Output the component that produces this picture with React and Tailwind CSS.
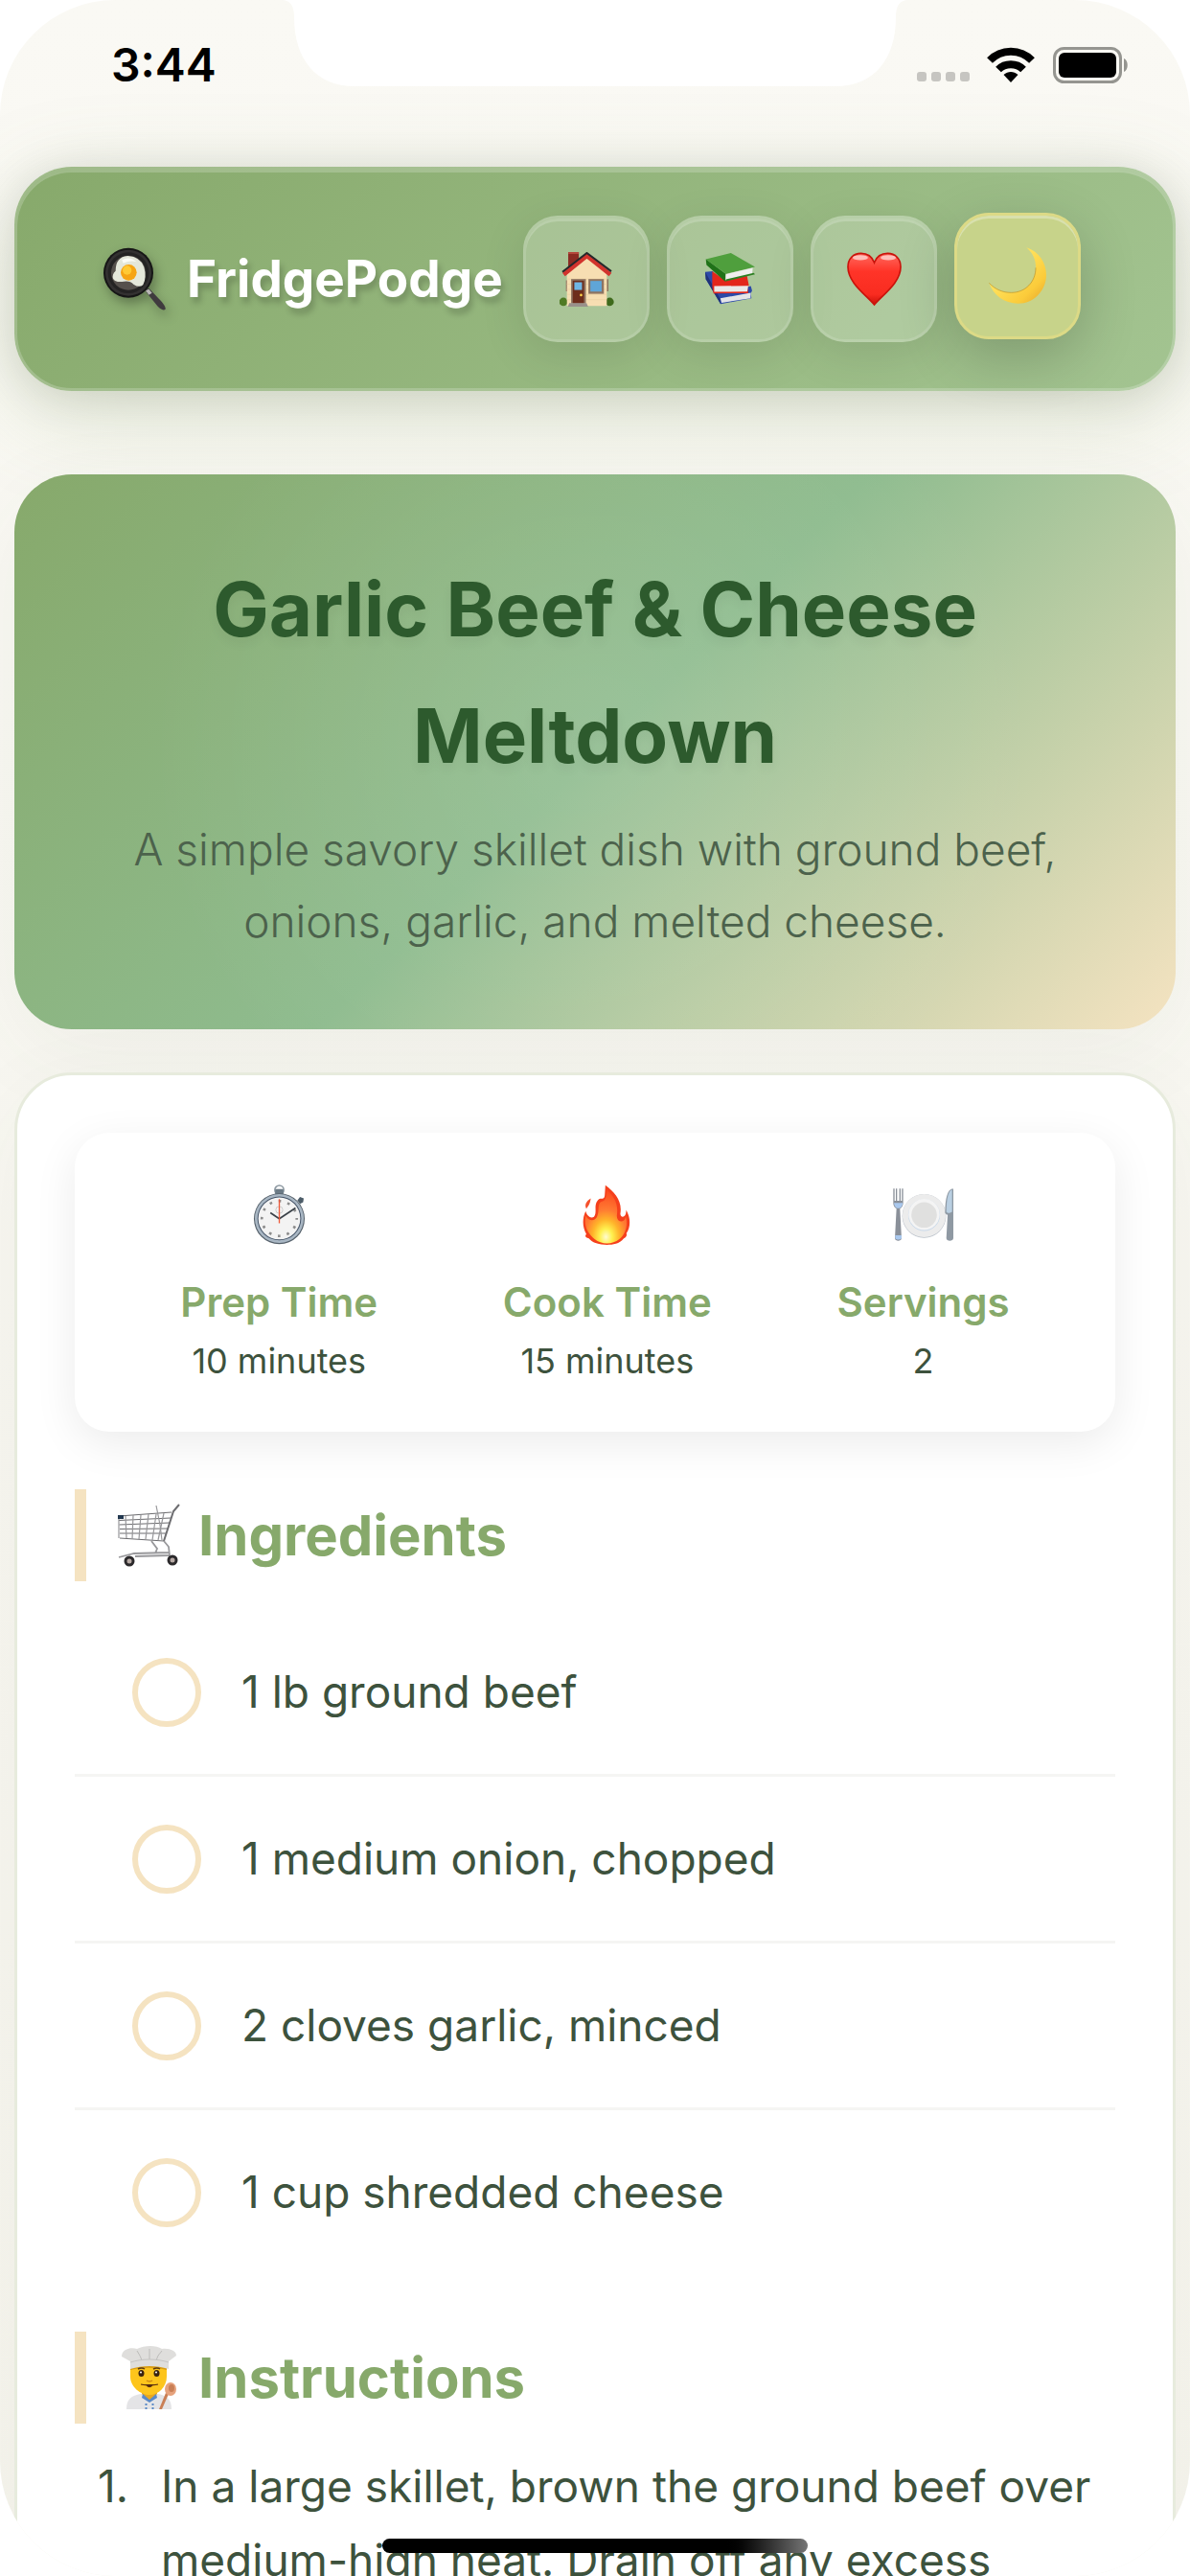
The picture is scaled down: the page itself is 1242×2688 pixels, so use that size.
import { useState } from "react";

function PanIcon() {
  return (
    <svg viewBox="0 0 198 198" className="size-[66px] shrink-0 drop-shadow-[3px_6px_6px_rgba(0,0,0,0.3)]" aria-hidden="true">
      <path d="M134 132 L142 128 L182 170 Q198 190 193 195 Q186 200 170 185 L134 141Z" fill="#3f3b3e" />
      <path d="M132 136 L142 131 L152 143 L142 149Z" fill="#b9b7b5" />
      <circle cx="78" cy="80" r="78" fill="#161616" />
      <circle cx="78" cy="80" r="72" fill="#333131" />
      <circle cx="78" cy="80" r="64" fill="#242323" />
      <circle cx="78" cy="80" r="54" fill="#55504c" />
      <path d="M30 98 Q26 84 38 74 Q38 30 76 27 Q116 30 127 62 Q136 94 124 118 Q112 128 94 116 Q82 102 58 108 Q36 110 30 98Z" fill="#e4e7da" />
      <path d="M58 40 Q82 26 104 46 Q84 40 62 50Z" fill="#fafbf6" />
      <circle cx="79" cy="79" r="25" fill="#f6a414" />
      <circle cx="74" cy="72" r="14" fill="#ffc935" />
    </svg>
  );
}

function HouseIcon() {
  return (
    <svg viewBox="0 0 170 170" className="size-[57px]" aria-hidden="true">
      <rect x="27" y="0" width="33" height="56" fill="#8a2a22" />
      <rect x="27" y="0" width="33" height="6" fill="#b4473c" />
      <path d="M20 88h5v34h-5zM147 84h5v38h-5z" fill="#8d6f5b" />
      <circle cx="12" cy="155" r="13" fill="#4f7a24" />
      <circle cx="156" cy="155" r="13" fill="#3f6a1c" />
      <path d="M23 168V66L85 14l62 52v102z" fill="#f7deb2" />
      <path d="M23 84h124M23 100h124M23 116h124M23 132h124M23 148h124" stroke="#ecd0a0" strokeWidth="2" />
      <path d="M13 70L85 12l73 58" fill="none" stroke="#d2332d" strokeWidth="13" />
      <path d="M9 62L85 3l76 57" fill="none" stroke="#26282b" strokeWidth="6" />
      <rect x="36" y="84" width="46" height="76" fill="#8e7461" />
      <rect x="41" y="89" width="35" height="71" fill="#6d2d1b" />
      <rect x="46" y="94" width="24" height="24" fill="#6fb6e4" />
      <circle cx="67" cy="134" r="4" fill="#ffd34a" />
      <rect x="90" y="84" width="48" height="46" fill="#8e7461" />
      <rect x="96" y="90" width="35" height="33" fill="#5fa5d8" />
      <path d="M30 159h54l5 11H26z" fill="#99918b" />
    </svg>
  );
}

function BooksIcon() {
  return (
    <svg viewBox="-6 -2 170 170" className="size-[57px]" aria-hidden="true">
      <path d="M0 60L24 58l30 66 88-20 4 14-4 8 2 16-96 18L2 82z" fill="#2c49a8" />
      <path d="M0 60l46 82 2 18L2 82z" fill="#1f3279" />
      <path d="M47 142l95-17-1 17-90 14z" fill="#e4e4e8" />
      <path d="M22 58l40 28 68-14 6 30-4 4 2 20-108 1-4-22z" fill="#e3261b" />
      <path d="M28 104l106-1-3 18-103 1z" fill="#ebe9e8" />
      <path d="M2 20L80 1l75 43-90 22z" fill="#4f9f3d" />
      <path d="M2 20l62 46-2 24L4 38z" fill="#1f7218" />
      <path d="M64 67l84-20-2 20-82 20z" fill="#f0efee" />
      <path d="M62 90l93-23-4-4-86 20z" fill="#2c7f22" />
    </svg>
  );
}

function HeartIcon() {
  return (
    <svg viewBox="0 0 172 170" className="size-[57px]" aria-hidden="true">
      <defs>
        <linearGradient id="heartFill" x1="0" y1="0" x2="0" y2="1">
          <stop offset="0" stopColor="#ff6a5f" />
          <stop offset="0.35" stopColor="#ff3428" />
          <stop offset="0.8" stopColor="#f92c20" />
          <stop offset="1" stopColor="#c81008" />
        </linearGradient>
      </defs>
      <path
        d="M86 165C62 135 3 97 3 46C3 20 20 3 44 3C66 3 80 16 86 32C92 16 106 3 128 3C152 3 169 20 169 46C169 97 110 135 86 165Z"
        fill="url(#heartFill)"
        stroke="#c9130b"
        strokeWidth="5"
      />
      <ellipse cx="42" cy="17" rx="24" ry="8" fill="#fff" opacity="0.6" />
      <ellipse cx="130" cy="17" rx="24" ry="8" fill="#fff" opacity="0.6" />
    </svg>
  );
}

function MoonIcon() {
  return (
    <svg viewBox="0 0 180 180" className="size-[60px]" aria-hidden="true">
      <defs>
        <linearGradient id="moonFill" x1="0" y1="0" x2="1" y2="1">
          <stop offset="0.4" stopColor="#ffe05a" />
          <stop offset="0.75" stopColor="#fbcb3a" />
          <stop offset="1" stopColor="#e3a32c" />
        </linearGradient>
      </defs>
      <path
        d="M118 1C158 14 180 50 180 86C180 136 140 176 92 176C48 176 14 150 1 112C20 132 44 142 70 142C115 142 147 108 147 64C147 38 138 18 118 1Z"
        fill="url(#moonFill)"
      />
      <path d="M1 112C20 132 44 142 70 142C115 142 147 108 147 64" fill="none" stroke="#b8912c" strokeWidth="2" />
    </svg>
  );
}

function StopwatchIcon() {
  return (
    <svg viewBox="-14 0 190 190" className="size-[63px]" aria-hidden="true">
      <circle cx="81" cy="17" r="14" fill="none" stroke="#8f9aa3" strokeWidth="5" />
      <rect x="68" y="14" width="26" height="18" rx="4" fill="#6b7a85" />
      <path d="M138 50l8-11 12 5-2 12-10 5z" fill="#4c5c68" />
      <circle cx="81" cy="108" r="80" fill="#56616b" />
      <circle cx="81" cy="107" r="77" fill="#a9b7c4" />
      <circle cx="81" cy="107" r="69" fill="#47566a" />
      <circle cx="81" cy="107" r="66" fill="#f3f3f3" />
      <circle cx="81" cy="107" r="55" fill="none" stroke="#8c8c8c" strokeWidth="8" strokeDasharray="8 20.8" strokeDashoffset="4" />
      <circle cx="81" cy="80" r="11" fill="none" stroke="#bbb" strokeWidth="2" />
      <path d="M53 89l28 19 51-34" fill="none" stroke="#3a4148" strokeWidth="5" />
      <path d="M81 46v76" stroke="#ee5a3a" strokeWidth="4" />
    </svg>
  );
}

function FireIcon() {
  return (
    <svg viewBox="-20 0 190 190" className="size-[63px]" aria-hidden="true">
      <defs>
        <radialGradient id="fireFill" cx="0.5" cy="0.88" r="0.85">
          <stop offset="0" stopColor="#fffbd0" />
          <stop offset="0.18" stopColor="#fff04e" />
          <stop offset="0.38" stopColor="#ffb32a" />
          <stop offset="0.6" stopColor="#ff7a32" />
          <stop offset="1" stopColor="#fb4a20" />
        </radialGradient>
      </defs>
      <path
        d="M70 2C100 24 124 52 117 92C118 108 138 104 135 80C150 104 150 134 136 154C140 162 132 168 128 170C114 188 94 190 75 190C52 190 28 184 18 170C8 168 4 162 10 156C-4 132 -2 104 8 84C12 100 24 108 34 102C46 88 30 62 50 46C58 42 66 50 68 34Z"
        fill="#f5401c"
      />
      <path
        d="M74 16C96 36 112 60 106 98C106 122 132 122 134 100C142 126 134 156 114 172C92 190 58 190 36 172C12 152 2 126 8 98C18 116 36 118 44 100C52 82 44 62 56 54C66 54 74 48 74 16Z"
        fill="url(#fireFill)"
      />
      <path d="M24 44C22 60 18 66 10 76C4 66 8 54 24 44Z" fill="#f5502c" />
    </svg>
  );
}

function PlateIcon() {
  return (
    <svg viewBox="0 -12 190 190" className="size-[63px]" aria-hidden="true">
      <circle cx="98" cy="87" r="69" fill="#b9c0c9" />
      <circle cx="98" cy="86" r="68" fill="#ececec" />
      <circle cx="98" cy="84" r="50" fill="#c9d9ea" />
      <circle cx="98" cy="82" r="49" fill="#f4f4f4" />
      <circle cx="98" cy="84" r="40" fill="#e0e0df" />
      <path d="M1 1h4v38h4V1h4v38h7V1h4v38h4V1h4v44c0 12-6 16-10 19l5 94c0 10-21 10-21 0l5-94C6 60 1 56 1 45z" fill="#8a9099" />
      <path d="M3 46h28c-2 12-6 14-10 17h-8C9 60 5 58 3 46zM7 148h20v9c0 6-20 6-20 0z" fill="#a9c8ee" />
      <path d="M188 1c-16 2-24 30-24 76 4 8 8 6 8 6l-4 74c0 11 22 11 22 0V3z" fill="#8f99a3" />
      <path d="M186 4c-12 4-18 30-18 70 5 6 10 4 18 0z" fill="#b9cfe2" />
    </svg>
  );
}

function CartIcon() {
  return (
    <svg viewBox="0 0 66 66" className="size-[66px]" fill="none" stroke="#6d6d70" strokeWidth="1.2" aria-hidden="true">
      <path d="M1 13L56 9M1 17.5L55 15M1.5 22L54 20M2 26.5L52 26M2 31L51 31M2 36L48 39" />
      <path d="M1 13v23M8 13l1 23M16 12l-1 25M24 12l-2 25M32 11l-3 26M40 11l-4 27M48 10l-6 28" stroke="#97979a" />
      <path d="M40 2l4 20 2 16" stroke="#97979a" />
      <path d="M64 1l-6 7-10 31" strokeWidth="2" />
      <path d="M48 39l5 6 1 9M35 39l6 8-2 5M1 56l16-4 37-1M54 54l-36 1" strokeWidth="1.8" stroke="#98989b" />
      <rect x="0" y="12" width="6" height="4" fill="#22384f" stroke="none" />
      <circle cx="12" cy="60" r="4" fill="#b7aaa5" stroke="#2b292b" strokeWidth="3" />
      <circle cx="57" cy="59" r="4" fill="#b7aaa5" stroke="#2b292b" strokeWidth="3" />
    </svg>
  );
}

function ChefIcon() {
  return (
    <svg viewBox="-4 0 66 66" className="size-[66px]" aria-hidden="true">
      <path d="M5 66C5 55 10 52 20 50h18c9 2 14 5 14 16z" fill="#e4e4e6" />
      <path d="M21 50l8 7 8-7v-4H21z" fill="#e8a81f" />
      <path d="M22 50l7 6 7-6 1 4-8 5-8-5z" fill="#5b8ac6" />
      <path d="M25.5 60v6M32.5 60v6" stroke="#5b8ac6" strokeWidth="2" strokeDasharray="2 2" />
      <path d="M9 20h38v12c0 11-9 19-18 19S9 43 9 32z" fill="#fdc51c" />
      <path d="M9 20h38v5c-12-3-26-3-38 0z" fill="#d99c12" />
      <path d="M17 24q4-2 7 0M33 24q4-2 7 0" stroke="#5c3b12" strokeWidth="1.5" fill="none" />
      <ellipse cx="20.5" cy="28.5" rx="3" ry="3.5" fill="#3a2410" />
      <ellipse cx="36.5" cy="28.5" rx="3" ry="3.5" fill="#3a2410" />
      <circle cx="20" cy="27.5" r="1" fill="#fff" />
      <circle cx="36" cy="27.5" r="1" fill="#fff" />
      <path d="M26 36q3 2 6 0" stroke="#c98512" strokeWidth="1.5" fill="none" />
      <path d="M20 40q9 2 18 0M26 41h6q-3 3-6 0z" stroke="#5a3010" strokeWidth="1.2" fill="#4d2410" />
      <path d="M9 24V16L0 11C0 3 10 1 16 3C24-1 36-1 42 3C50 2 57 5 57 10L49 16v8C36 20 22 20 9 24Z" fill="#dfdedc" />
      <path d="M16 5q4 6 5 10M42 5q-5 5-6 10M29 3v11" stroke="#bdbcba" fill="none" />
      <path d="M9 17C22 13 36 13 49 17" stroke="#c6c5c3" fill="none" />
      <path d="M49 50L42 66h-3l7-17z" fill="#c97f56" />
      <ellipse cx="51" cy="45" rx="6" ry="7" fill="#e6a27c" />
      <ellipse cx="52" cy="44" rx="3" ry="4" fill="#c97f56" />
    </svg>
  );
}

function StatusBar() {
  return (
    <div className="flex h-[132px] shrink-0 items-center justify-between pt-1 pr-16 pl-[116px]">
      <span className="text-5xl font-semibold text-black">3:44</span>
      <svg viewBox="0 0 222 38" className="h-[38px] w-[222px]" aria-hidden="true">
        <g fill="#c6c5c1">
          <rect x="1" y="26" width="10" height="10" rx="3" />
          <rect x="16" y="26" width="10" height="10" rx="3" />
          <rect x="31" y="26" width="10" height="10" rx="3" />
          <rect x="46" y="26" width="10" height="10" rx="3" />
        </g>
        <g fill="none" stroke="#000" strokeWidth="8">
          <path d="M77 14C89 1.5 109 1.5 121 14" />
          <path d="M86 23.5C93 16.5 105 16.5 112 23.5" />
        </g>
        <path d="M91.5 29C96 25 102 25 106.500 29L99 37Z" fill="#000" />
        <rect x="144.5" y="1.5" width="69" height="35" rx="10" fill="none" stroke="#959590" strokeWidth="3" />
        <rect x="149" y="6" width="60" height="26" rx="6" fill="#000" />
        <path d="M217 12C222 14 222 24 217 26Z" fill="#959590" />
      </svg>
    </div>
  );
}

function Notch() {
  return (
    <svg viewBox="0 0 654 90" className="absolute top-0 left-1/2 h-[90px] w-[654px] -translate-x-1/2" aria-hidden="true">
      <path d="M0 0C9 0 13 6 13 18C13 62 36 90 76 90H578C618 90 641 62 641 18C641 6 645 0 654 0Z" fill="#fff" />
    </svg>
  );
}

const navItems = [
  { id: "home", label: "Home", Icon: HouseIcon },
  { id: "recipes", label: "Recipes", Icon: BooksIcon },
  { id: "favorites", label: "Favorites", Icon: HeartIcon },
];

function Navbar({ night, onToggle }) {
  return (
    <nav className="flex h-[234px] items-center justify-between rounded-[60px] border-3 border-white/20 bg-linear-135 from-[#87a96b] to-[#a3c491] bg-origin-border pr-24 pl-[90px] shadow-[0_24px_96px_rgba(135,169,107,0.25),0_6px_48px_rgba(0,0,0,0.12),inset_0_3px_0_rgba(255,255,255,0.2)]">
      <a href="#home" className="flex items-center gap-[21px] text-[53px] font-bold text-white">
        <PanIcon />
        <span className="text-shadow-[3px_6px_6px_rgba(0,0,0,0.2)]">FridgePodge</span>
      </a>
      <div className="flex gap-[18px]">
        {navItems.map(({ id, label, Icon }) => (
          <button
            key={id}
            aria-label={label}
            className="flex size-[132px] items-center justify-center rounded-[36px] border-3 border-white/30 bg-white/20 bg-clip-padding shadow-[0_12px_48px_rgba(0,0,0,0.1),inset_0_3px_0_rgba(255,255,255,0.2)]"
          >
            <Icon />
          </button>
        ))}
        <button
          aria-label="Toggle dark mode"
          aria-pressed={night}
          onClick={onToggle}
          className="flex size-[132px] -translate-y-[3px] items-center justify-center rounded-[36px] border-3 border-[#dcda86] bg-[#c7d38a] shadow-[0_18px_60px_rgba(0,0,0,0.2),inset_0_3px_0_rgba(255,255,255,0.3)]"
        >
          <MoonIcon />
        </button>
      </div>
    </nav>
  );
}

const meta = [
  { label: "Prep Time", value: "10 minutes", Icon: StopwatchIcon },
  { label: "Cook Time", value: "15 minutes", Icon: FireIcon },
  { label: "Servings", value: "2", Icon: PlateIcon },
];

const ingredients = ["1 lb ground beef", "1 medium onion, chopped", "2 cloves garlic, minced", "1 cup shredded cheese"];

const steps = ["In a large skillet, brown the ground beef over medium-high heat. Drain off any excess"];

function SectionTitle({ Icon, children }) {
  return (
    <h2 className="flex h-24 items-center gap-[18px] border-l-12 border-[#f5e3c1] pl-[33px] text-[58px] font-bold text-[#87a96b]">
      <Icon />
      {children}
    </h2>
  );
}

function Ingredient({ name }) {
  return (
    <li className="border-b-3 border-[#f5f5f3] last:border-b-0">
      <label className="flex h-[171px] items-center gap-[42px] px-[60px]">
        <input
          type="checkbox"
          className="size-[72px] shrink-0 appearance-none rounded-full border-6 border-[#f5e3c1] checked:bg-[#87a96b]"
        />
        {name}
      </label>
    </li>
  );
}

export default function App() {
  const [night, setNight] = useState(false);

  return (
    <div className="h-screen overflow-hidden bg-white font-[Inter,sans-serif]">
      <div className="relative flex h-full flex-col overflow-hidden rounded-[120px] bg-linear-to-b from-[#faf9f4] to-[#f6f5ed] text-[46px] leading-[77px] text-[#3d523d]">
        <StatusBar />
        <Notch />

        <div className="flex flex-col px-[15px] pt-[42px]">
          <Navbar night={night} onToggle={() => setNight(!night)} />

          <header className="mt-[87px] rounded-[60px] bg-[radial-gradient(circle,rgba(255,255,255,0.1),transparent_70%),linear-gradient(135deg,#87a96b,#8fbc8f_50%,#f5e3c1)] px-[60px] pt-[75px] pb-[75px] text-center shadow-[0_24px_96px_rgba(60,80,60,0.06)]">
            <h1 className="text-[78px] leading-[132px] font-bold text-[#2d5a2d] text-shadow-[0_6px_12px_rgba(0,0,0,0.05)]">
              Garlic Beef & Cheese Meltdown
            </h1>
            <p className="mt-[15px] text-[46px] leading-[75px] font-light text-[#4c624c]">
              A simple savory skillet dish with ground beef, onions, garlic, and melted cheese.
            </p>
          </header>

          <main className="mt-[45px] rounded-t-[60px] border-3 border-[#e7ebdd] bg-white p-[60px] shadow-[0_24px_96px_rgba(60,80,60,0.05)]">
            <section className="flex h-[312px] justify-around rounded-[36px] bg-white px-[45px] pt-[54px] text-center shadow-[0_12px_45px_rgba(0,0,0,0.08)]">
              {meta.map(({ label, value, Icon }) => (
                <div key={label} className="flex flex-col items-center">
                  <Icon />
                  <h3 className="mt-[27px] text-[42px] leading-[66px] font-semibold text-[#87a96b]">{label}</h3>
                  <p className="text-4xl leading-[57px]">{value}</p>
                </div>
              ))}
            </section>

            <section className="mt-[60px]">
              <SectionTitle Icon={CartIcon}>Ingredients</SectionTitle>
              <ul className="mt-[30px]">
                {ingredients.map((name) => (
                  <Ingredient key={name} name={name} />
                ))}
              </ul>
            </section>

            <section className="mt-[60px]">
              <SectionTitle Icon={ChefIcon}>Instructions</SectionTitle>
              <ol className="mt-[27px] pl-6">
                {steps.map((step, i) => (
                  <li key={step} className="flex">
                    <span className="w-[66px] shrink-0">{i + 1}.</span>
                    <p>{step}</p>
                  </li>
                ))}
              </ol>
            </section>
          </main>
        </div>

        {/* home indicator */}
        <div className="absolute bottom-6 left-1/2 h-[15px] w-[444px] -translate-x-1/2 rounded-full bg-linear-to-r from-black from-80% to-[#777]" />
      </div>
    </div>
  );
}
